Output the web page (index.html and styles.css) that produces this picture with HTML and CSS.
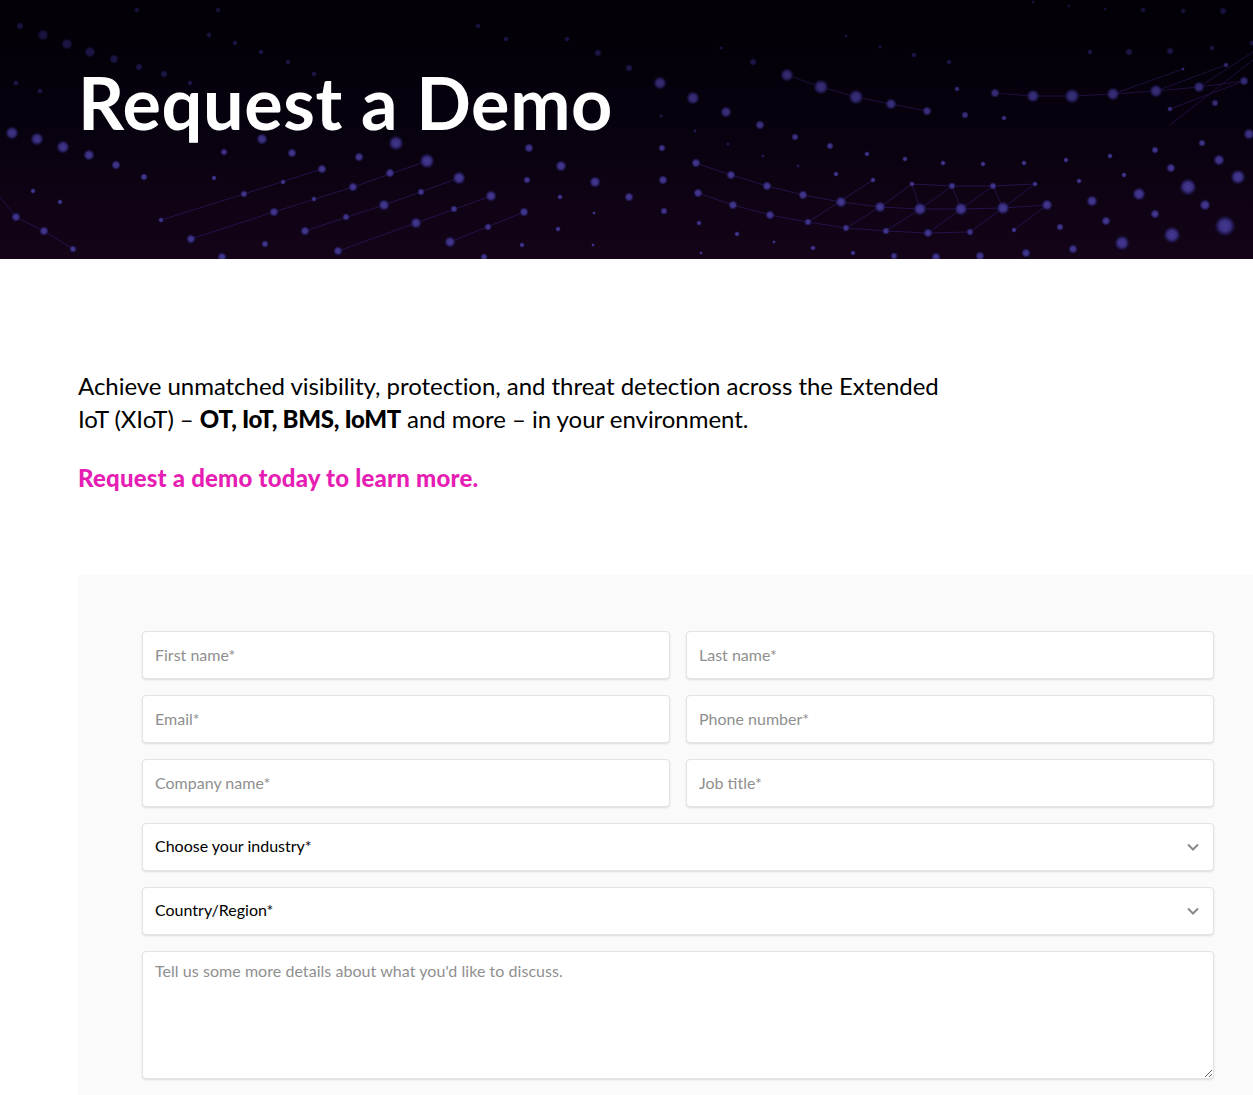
FILE: index.html
```html
<!DOCTYPE html>
<html lang="en">
<head>
<meta charset="utf-8">
<title>Request a Demo</title>
<link rel="stylesheet" href="styles.css">
</head>
<body>
<header class="hero">
  <svg class="hero-bg" viewBox="0 0 1253 259" preserveAspectRatio="none" aria-hidden="true">
    <defs>
      <radialGradient id="glow">
        <stop offset="0" stop-color="#453a92"/>
        <stop offset="0.5" stop-color="#3a2f80"/>
        <stop offset="0.75" stop-color="#241c5c" stop-opacity=".7"/>
        <stop offset="1" stop-color="#120c35" stop-opacity="0"/>
      </radialGradient>
      <radialGradient id="faint">
        <stop offset="0" stop-color="#262060"/>
        <stop offset="0.6" stop-color="#1f1950"/>
        <stop offset="1" stop-color="#0c0825" stop-opacity="0"/>
      </radialGradient>
      <linearGradient id="shade" x1="0" y1="0" x2="0" y2="1">
        <stop offset="0" stop-color="#020005"/>
        <stop offset="0.45" stop-color="#07010e"/>
        <stop offset="1" stop-color="#140418"/>
      </linearGradient>
      <linearGradient id="dim" x1="0" y1="0" x2="0" y2="1">
        <stop offset="0" stop-color="#030008" stop-opacity=".4"/>
        <stop offset="1" stop-color="#07010e" stop-opacity="0"/>
      </linearGradient>
    </defs>
    <rect width="1253" height="259" fill="url(#shade)"/>
    <g class="net">
      <path d="M0 197L16 217L44 231L73 249"/>
      <path d="M161 220L244 194L322 169"/>
      <path d="M191 239L274 212L353 187L427 161"/>
      <path d="M305 231L384 205L459 178"/>
      <path d="M338 251L416 223L491 196"/>
      <path d="M450 242L524 212"/>
      <path d="M696 163L731 175L767 186L803 195L841 202L880 207L920 209L961 209L1003 208L1047 205"/>
      <path d="M698 193L733 205L770 215L808 222L846 228L886 231L928 233L970 232"/>
      <path d="M886 231L920 209M928 233L961 209M970 232L1003 208M1014 230L1047 205"/>
      <path d="M912 184L952 186L993 186L1035 184M912 184L920 209M952 186L961 209M993 186L1003 208"/>
      <path d="M880 207L912 184M920 209L952 186M961 209L993 186M1003 208L1035 184M808 222L873 180M846 228L880 207"/>
      <path d="M787 75L821 87L856 97L891 104L927 111"/>
      <path d="M995 93L1033 96L1072 96L1113 94L1156 91L1199 87L1244 81"/>
      <path d="M1113 94L1183 69M1156 91L1226 65M1199 87L1253 52M1170 109L1244 81M1170 125L1253 60"/>
    </g>
    <g fill="url(#faint)">
      <circle cx="43" cy="35" r="6"/><circle cx="67" cy="44" r="6"/><circle cx="90" cy="52" r="6"/><circle cx="114" cy="59" r="5"/><circle cx="139" cy="67" r="4"/><circle cx="164" cy="74" r="4"/><circle cx="190" cy="83" r="3"/><circle cx="20" cy="26" r="4"/><circle cx="629" cy="68" r="4"/><circle cx="598" cy="53" r="4"/><circle cx="567" cy="39" r="3"/><circle cx="506" cy="39" r="3"/><circle cx="478" cy="26" r="3"/><circle cx="288" cy="62" r="3"/><circle cx="261" cy="52" r="3"/><circle cx="235" cy="43" r="3"/><circle cx="209" cy="35" r="3"/><circle cx="314" cy="74" r="3"/><circle cx="218" cy="10" r="3"/><circle cx="137" cy="10" r="3"/><circle cx="40" cy="91" r="3"/><circle cx="16" cy="83" r="3"/>
      <circle cx="753" cy="62" r="4"/><circle cx="1090" cy="52" r="3"/><circle cx="1129" cy="52" r="4"/><circle cx="1170" cy="51" r="4"/><circle cx="1212" cy="48" r="3"/><circle cx="1223" cy="11" r="4"/><circle cx="1183" cy="11" r="3"/><circle cx="1143" cy="10" r="3"/><circle cx="1105" cy="9" r="2"/><circle cx="1069" cy="6" r="2"/><circle cx="1033" cy="2" r="2"/><circle cx="949" cy="62" r="3"/><circle cx="914" cy="55" r="3"/><circle cx="880" cy="47" r="2"/><circle cx="1252" cy="43" r="3"/><circle cx="846" cy="36" r="2"/><circle cx="721" cy="48" r="2"/><circle cx="661" cy="116" r="2"/><circle cx="695" cy="131" r="2"/><circle cx="728" cy="144" r="2"/><circle cx="763" cy="156" r="2"/><circle cx="798" cy="166" r="2"/>
    </g>
    <g fill="url(#glow)">
      <circle cx="12" cy="133" r="7"/><circle cx="37" cy="139" r="7"/><circle cx="63" cy="147" r="7"/><circle cx="89" cy="155" r="6"/><circle cx="116" cy="165" r="5"/><circle cx="144" cy="177" r="4"/><circle cx="214" cy="178" r="3"/><circle cx="244" cy="194" r="4"/><circle cx="274" cy="212" r="5"/><circle cx="305" cy="231" r="5"/><circle cx="338" cy="251" r="5"/><circle cx="191" cy="239" r="5"/><circle cx="44" cy="231" r="5"/><circle cx="16" cy="217" r="5"/><circle cx="73" cy="249" r="4"/><circle cx="161" cy="220" r="3"/><circle cx="60" cy="202" r="3"/><circle cx="33" cy="191" r="3"/><circle cx="265" cy="244" r="4"/><circle cx="222" cy="257" r="5"/>
      <circle cx="353" cy="187" r="5"/><circle cx="384" cy="205" r="6"/><circle cx="416" cy="223" r="6"/><circle cx="450" cy="242" r="6"/><circle cx="459" cy="178" r="7"/><circle cx="491" cy="196" r="6"/><circle cx="524" cy="212" r="5"/><circle cx="454" cy="209" r="4"/><circle cx="427" cy="161" r="8"/><circle cx="396" cy="143" r="8"/><circle cx="561" cy="166" r="6"/><circle cx="595" cy="182" r="6"/><circle cx="629" cy="197" r="5"/><circle cx="529" cy="148" r="5"/><circle cx="359" cy="157" r="5"/><circle cx="390" cy="173" r="5"/><circle cx="421" cy="192" r="4"/><circle cx="322" cy="169" r="5"/><circle cx="292" cy="153" r="5"/><circle cx="262" cy="139" r="6"/><circle cx="224" cy="152" r="4"/><circle cx="488" cy="227" r="4"/><circle cx="527" cy="180" r="4"/><circle cx="314" cy="199" r="3"/><circle cx="283" cy="182" r="3"/><circle cx="346" cy="217" r="4"/><circle cx="560" cy="197" r="3"/><circle cx="594" cy="213" r="2"/><circle cx="558" cy="229" r="3"/><circle cx="593" cy="245" r="2"/><circle cx="522" cy="245" r="3"/><circle cx="484" cy="257" r="4"/>
      <circle cx="660" cy="83" r="7"/><circle cx="693" cy="98" r="7"/><circle cx="726" cy="112" r="6"/><circle cx="760" cy="125" r="5"/><circle cx="795" cy="137" r="4"/><circle cx="830" cy="146" r="4"/><circle cx="867" cy="154" r="3"/><circle cx="905" cy="159" r="3"/><circle cx="943" cy="163" r="3"/><circle cx="983" cy="164" r="3"/><circle cx="1024" cy="163" r="3"/><circle cx="1066" cy="160" r="3"/><circle cx="1110" cy="156" r="3"/><circle cx="1155" cy="150" r="4"/><circle cx="1202" cy="143" r="4"/><circle cx="1249" cy="134" r="6"/>
      <circle cx="787" cy="75" r="7"/><circle cx="821" cy="87" r="8"/><circle cx="856" cy="97" r="8"/><circle cx="891" cy="104" r="6"/><circle cx="927" cy="111" r="5"/><circle cx="965" cy="115" r="4"/><circle cx="1004" cy="118" r="3"/><circle cx="995" cy="93" r="5"/><circle cx="1033" cy="96" r="7"/><circle cx="1072" cy="96" r="8"/><circle cx="1113" cy="94" r="7"/><circle cx="1156" cy="91" r="7"/><circle cx="1199" cy="87" r="6"/><circle cx="1244" cy="81" r="5"/><circle cx="957" cy="89" r="3"/><circle cx="1215" cy="103" r="4"/><circle cx="1170" cy="109" r="3"/><circle cx="1226" cy="65" r="3"/><circle cx="1183" cy="69" r="2"/>
      <circle cx="662" cy="148" r="4"/><circle cx="696" cy="163" r="5"/><circle cx="731" cy="175" r="5"/><circle cx="767" cy="186" r="5"/><circle cx="803" cy="195" r="5"/><circle cx="841" cy="202" r="6"/><circle cx="880" cy="207" r="6"/><circle cx="920" cy="209" r="7"/><circle cx="961" cy="209" r="7"/><circle cx="1003" cy="208" r="7"/><circle cx="1047" cy="205" r="6"/><circle cx="1092" cy="201" r="6"/><circle cx="1139" cy="194" r="7"/><circle cx="1188" cy="187" r="9"/><circle cx="1238" cy="177" r="8"/>
      <circle cx="663" cy="180" r="5"/><circle cx="698" cy="193" r="5"/><circle cx="733" cy="205" r="5"/><circle cx="770" cy="215" r="5"/><circle cx="808" cy="222" r="4"/><circle cx="846" cy="228" r="4"/><circle cx="886" cy="231" r="4"/><circle cx="928" cy="233" r="5"/><circle cx="970" cy="232" r="4"/><circle cx="1014" cy="230" r="3"/><circle cx="1060" cy="227" r="4"/><circle cx="1106" cy="221" r="5"/><circle cx="1155" cy="214" r="5"/><circle cx="1205" cy="205" r="6"/>
      <circle cx="1219" cy="160" r="6"/><circle cx="1171" cy="168" r="5"/><circle cx="1124" cy="175" r="3"/><circle cx="1079" cy="181" r="3"/><circle cx="1035" cy="184" r="3"/><circle cx="993" cy="186" r="4"/><circle cx="952" cy="186" r="4"/><circle cx="912" cy="184" r="3"/><circle cx="873" cy="180" r="3"/><circle cx="836" cy="174" r="3"/>
      <circle cx="664" cy="211" r="4"/><circle cx="699" cy="223" r="3"/><circle cx="737" cy="234" r="3"/><circle cx="1172" cy="235" r="9"/><circle cx="1225" cy="226" r="11"/><circle cx="1122" cy="243" r="8"/><circle cx="1073" cy="249" r="5"/><circle cx="1026" cy="253" r="5"/><circle cx="980" cy="256" r="5"/><circle cx="936" cy="257" r="5"/><circle cx="894" cy="256" r="4"/><circle cx="853" cy="253" r="3"/><circle cx="813" cy="248" r="3"/><circle cx="774" cy="242" r="2"/><circle cx="701" cy="253" r="2"/>
    </g>
    <rect width="1253" height="170" fill="url(#dim)"/>
  </svg>
  <h1 class="hero-title">Request a Demo</h1>
</header>
<main class="content">
  <p class="lead">Achieve unmatched visibility, protection, and threat detection across the Extended IoT (XIoT) – <strong>OT, IoT, BMS, IoMT</strong> and more – in your environment.</p>
  <p class="cta">Request a demo today to learn more.</p>
  <form class="panel">
    <div class="fields">
      <input class="field" type="text" placeholder="First name*">
      <input class="field" type="text" placeholder="Last name*">
      <input class="field" type="email" placeholder="Email*">
      <input class="field" type="tel" placeholder="Phone number*">
      <input class="field" type="text" placeholder="Company name*">
      <input class="field" type="text" placeholder="Job title*">
      <div class="select-wrap">
        <select class="field select"><option>Choose your industry*</option></select>
        <svg class="chevron" viewBox="0 0 12 8" aria-hidden="true"><path d="M1 1.5L6 6.5L11 1.5"/></svg>
      </div>
      <div class="select-wrap">
        <select class="field select"><option>Country/Region*</option></select>
        <svg class="chevron" viewBox="0 0 12 8" aria-hidden="true"><path d="M1 1.5L6 6.5L11 1.5"/></svg>
      </div>
      <textarea class="field area" placeholder="Tell us some more details about what you'd like to discuss."></textarea>
    </div>
  </form>
</main>
</body>
</html>
```

FILE: styles.css
```css
* { box-sizing: border-box; }
html, body { margin: 0; padding: 0; background: #fff; }
body { font-family: "Lato", "Liberation Sans", sans-serif; color: #000; }

.hero {
  position: relative;
  height: 259px;
  padding: 59px 0 0 78px;
  overflow: hidden;
  background: #08010f;
}
.hero-bg { position: absolute; inset: 0; width: 100%; height: 100%; }
.net { fill: none; stroke: #24124a; stroke-width: 1; }
.hero-title {
  position: relative;
  margin: 0;
  font-size: 72px;
  line-height: 86px;
  font-weight: 700;
  letter-spacing: 0.6px;
  color: #fff;
}

.content { padding: 110px 0 0 78px; }
.lead {
  margin: 0;
  width: 880px;
  font-size: 24px;
  line-height: 33px;
  letter-spacing: -0.04px;
}
.lead strong { font-weight: 900; letter-spacing: -0.3px; }
.cta {
  margin: 26px 0 0;
  font-size: 24px;
  line-height: 33px;
  font-weight: 900;
  letter-spacing: 0.2px;
  color: #e61eb4;
}

.panel {
  margin-top: 81px;
  padding: 56px 39px 16px 64px;
  background: #fafafa;
}
.fields {
  display: grid;
  grid-template-columns: 1fr 1fr;
  gap: 16px;
}
.field {
  display: block;
  width: 100%;
  height: 48px;
  padding: 0 12px 2px;
  border: 1px solid #e3e3e3;
  border-radius: 4px;
  background: #fff;
  box-shadow: 0 1px 2px rgba(0, 0, 0, .12);
  font-family: inherit;
  font-size: 16px;
  color: #000;
  outline: none;
}
.field::placeholder { color: #8f8f8f; opacity: 1; }
.select-wrap { position: relative; grid-column: 1 / -1; }
.select { appearance: none; -webkit-appearance: none; padding-bottom: 4px; }
.chevron {
  position: absolute;
  top: 20px;
  right: 15px;
  width: 12px;
  height: 8px;
  fill: none;
  stroke: #8a8a8a;
  stroke-width: 2;
  pointer-events: none;
}
.area {
  grid-column: 1 / -1;
  height: 128px;
  padding-top: 9px;
  letter-spacing: 0.05px;
  resize: vertical;
}
```
